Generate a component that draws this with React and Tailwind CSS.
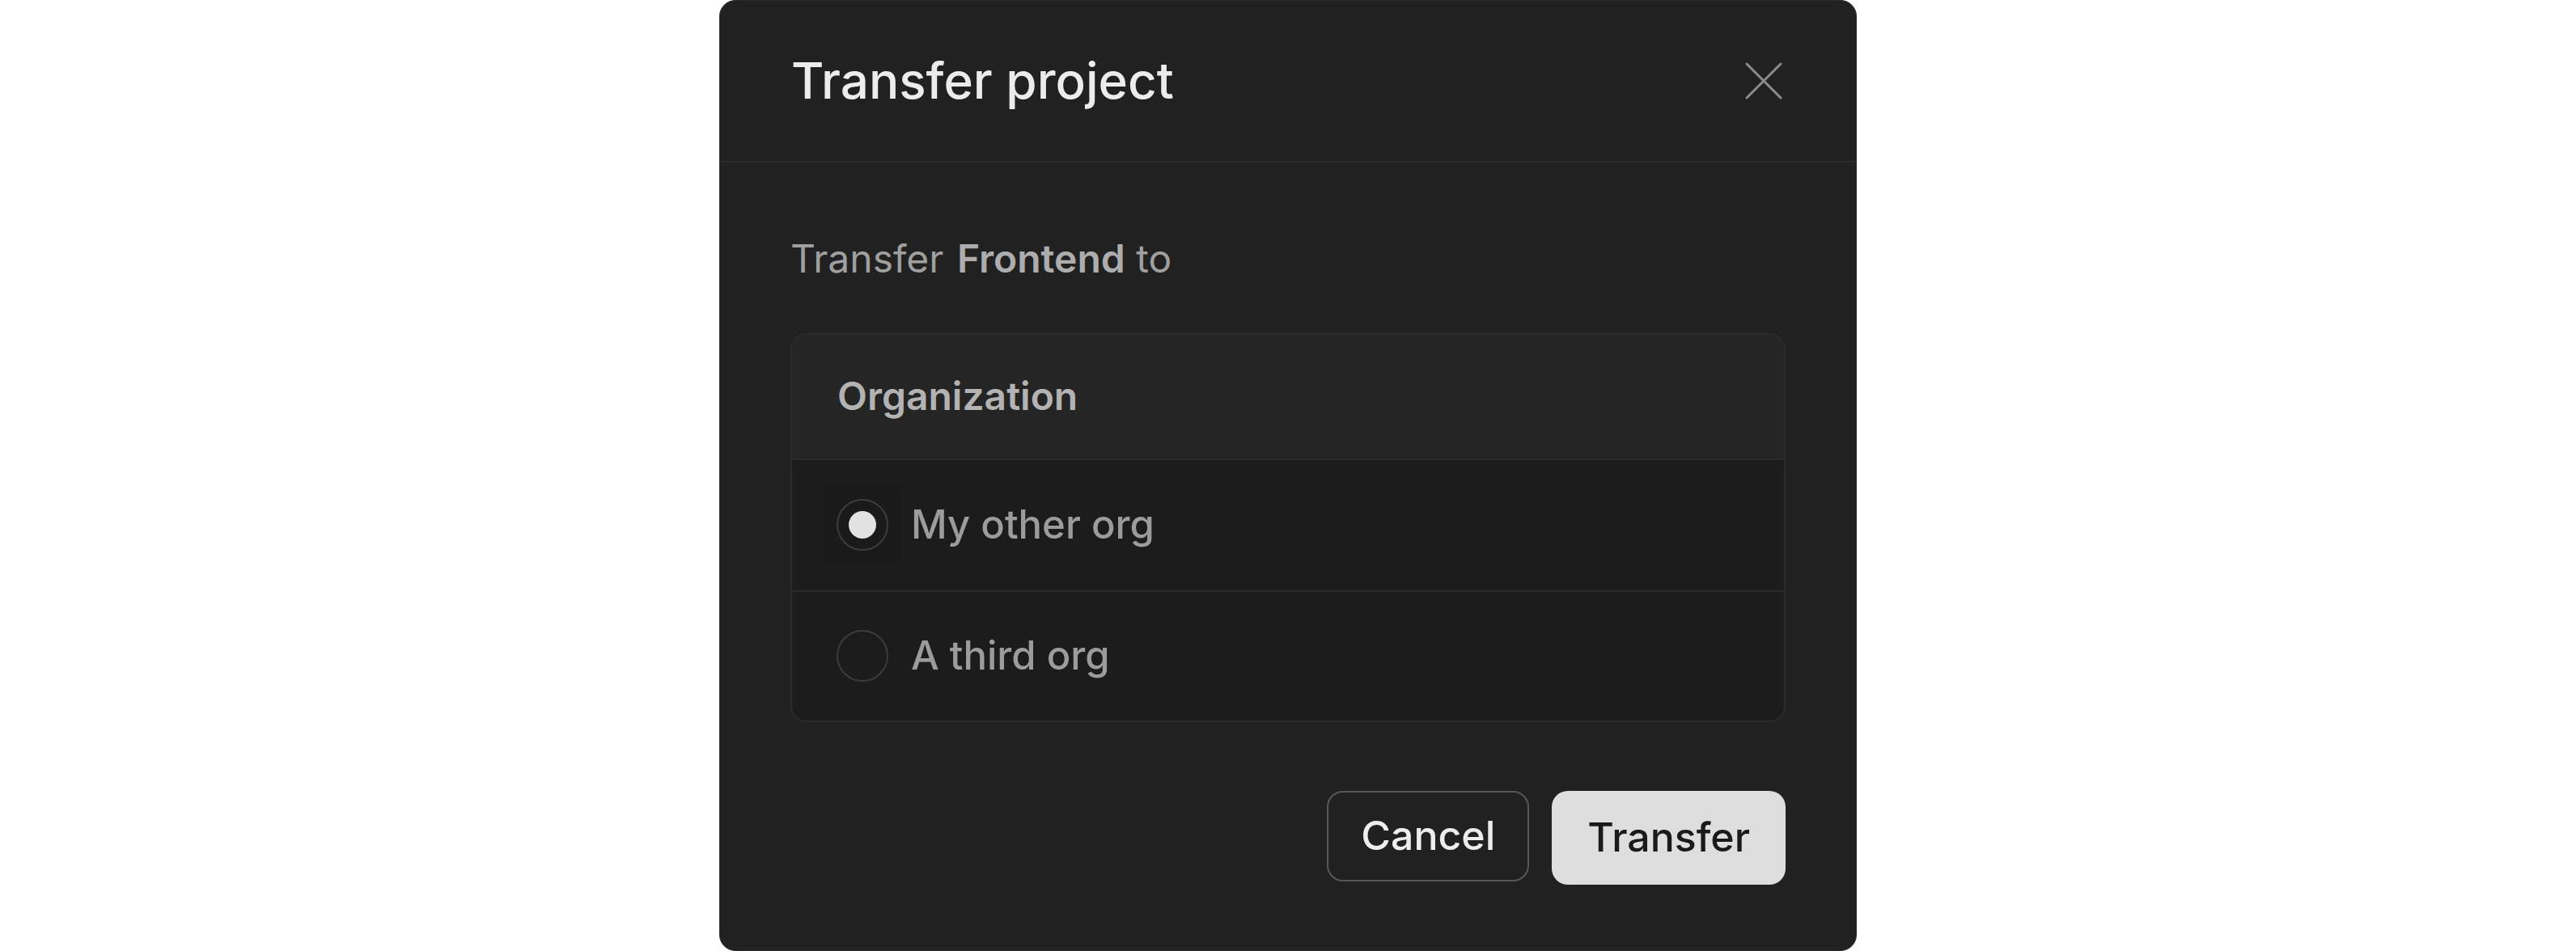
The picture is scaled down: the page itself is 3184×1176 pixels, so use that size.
const orgs = [
  { id: "other", name: "My other org" },
  { id: "third", name: "A third org" },
];

function CloseIcon() {
  return (
    <svg width="48" height="48" viewBox="0 0 48 48" fill="none">
      <path d="M3 3L45 45M45 3L3 45" stroke="#8c8c8c" strokeWidth="3" strokeLinecap="round" />
    </svg>
  );
}

function Radio({ checked }) {
  return (
    <div className={`flex h-24 w-24 items-center justify-center ${checked ? "bg-[#1a1a1a]" : ""}`}>
      <div className="flex h-16 w-16 items-center justify-center rounded-full border-2 border-[#3c3c3c]">
        {checked ? <div className="h-[34px] w-[34px] rounded-full bg-[#e2e2e2]" /> : null}
      </div>
    </div>
  );
}

export default function App() {
  const selected = "other";

  return (
    <div className="min-h-[1176px] bg-white font-['Inter',sans-serif]">
      <div className="mx-auto flex h-[1176px] w-[1406px] flex-col rounded-[20px] border border-[#2a2a2a] bg-[#212121]">
        <div className="flex h-[200px] shrink-0 items-center justify-between border-b-2 border-[#2b2b2b] pl-[88px] pr-[90px]">
          <h2 className="text-[62px] font-medium leading-none text-[#ececec]">Transfer project</h2>
          <button className="flex h-12 w-12 items-center justify-center">
            <CloseIcon />
          </button>
        </div>

        <div className="flex flex-1 flex-col px-[87px] pt-[90px]">
          <p className="text-[48px] leading-[1.2] text-[#9f9f9f]">
            Transfer <span className="ml-[3px] font-semibold text-[#adadad]">Frontend</span> to
          </p>

          <div className="mt-[63px] overflow-hidden rounded-[20px] border-2 border-[#2b2b2b]">
            <div className="flex h-[155px] items-center border-b-2 border-[#2b2b2b] bg-[#252525] pl-[56px]">
              <span className="text-[48px] font-semibold text-[#b3b3b3]">Organization</span>
            </div>
            {orgs.map((org, index) => (
              <div
                key={org.id}
                className={`flex h-[161px] items-center gap-3 bg-[#1c1c1c] pl-[39px] ${index > 0 ? "border-t-2 border-[#2b2b2b]" : ""}`}
              >
                <Radio checked={org.id === selected} />
                <span className="text-[49px] font-medium text-[#9c9c9c]">{org.name}</span>
              </div>
            ))}
          </div>

          <div className="mt-[85px] flex justify-end gap-[28px]">
            <button className="flex h-[112px] items-center rounded-[20px] border-2 border-[#575757] px-[40px] text-[50px] font-medium text-[#ededed]">
              Cancel
            </button>
            <button className="flex h-[116px] items-center rounded-[20px] bg-[#dedede] px-[44px] text-[50px] font-medium text-[#1a1a1a]">
              Transfer
            </button>
          </div>
        </div>
      </div>
    </div>
  );
}
